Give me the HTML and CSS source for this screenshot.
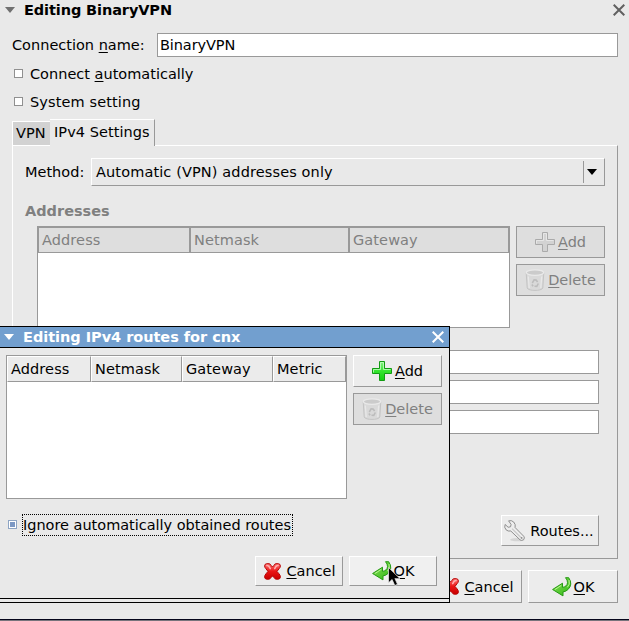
FILE: index.html
```html
<!DOCTYPE html>
<html lang="en">
<head>
<meta charset="utf-8">
<title>Editing BinaryVPN</title>
<link rel="stylesheet" href="styles.css">
</head>
<body>
<svg class="defs" width="0" height="0">
  <defs>
    <linearGradient id="green" x1="0" y1="0" x2="0" y2="1"><stop offset="0" stop-color="#8cf08a"/><stop offset=".5" stop-color="#35e52f"/><stop offset="1" stop-color="#12cf10"/></linearGradient>
    <linearGradient id="red" x1="0" y1="0" x2="0" y2="1"><stop offset="0" stop-color="#ff7373"/><stop offset=".5" stop-color="#e91515"/><stop offset="1" stop-color="#c90000"/></linearGradient>
    <linearGradient id="leaf" x1="0" y1="0" x2="1" y2="1"><stop offset="0" stop-color="#8be05a"/><stop offset="1" stop-color="#2fb714"/></linearGradient>
    <symbol id="plus" viewBox="0 0 20 20">
      <path d="M7.5.5h5v7h7v5h-7v7h-5v-7h-7v-5h7z" fill="url(#green)" stroke="#129b13"/>
      <path d="M8.5 8.500v-7h3v7h7M8.500 8.500h-7v3" fill="none" stroke="#c4ffc2" stroke-opacity=".8"/>
    </symbol>
    <symbol id="plus-off" viewBox="0 0 20 20">
      <path d="M7.5.5h5v7h7v5h-7v7h-5v-7h-7v-5h7z" fill="#d2d2d2" stroke="#aaa"/>
      <path d="M8.500 8.500v-7h3v7h7M8.500 8.500h-7v3" fill="none" stroke="#e6e6e6"/>
    </symbol>
    <symbol id="bin" viewBox="0 0 20 22">
      <path d="M1.200 3.500l1 15.500c1 3.200 14.600 3.200 15.600 0l1-15.500z" fill="#d9d9d9" stroke="#c4c4c4"/>
      <ellipse cx="10" cy="3.600" rx="8.700" ry="2.700" fill="#cbcbcb" stroke="#e9e9e9" stroke-width="1.300"/>
      <path d="M3.300 7.500l.9 11.500M16.700 7.500l-.9 11.500" stroke="#e8e8e8" stroke-width="1.300" fill="none"/>
      <path d="M7.300 14l1.800-3.200 2 .3 1.500 2M13.300 14.500l-1.500 2.900-2.300-.2M6.900 15.500l1.200 1.800" stroke="#bcbcbc" stroke-width="1.600" fill="none"/>
    </symbol>
    <symbol id="cross" viewBox="0 0 17 17">
      <path d="M2.600.7H5Q6.300.8 7 2.300L8.500 4l1.500-1.700Q10.700.8 12 .7h2.400q2 .3 2 2.100 0 1.700-1.300 2.900L13 8.400l2.100 2.500q1.300 1.400 1.300 3 0 2-2 2.300H12.200q-1.300-.1-2.200-1.600L8.500 12.900 7 14.600q-.9 1.500-2.200 1.600H2.600q-2-.3-2-2.300 0-1.600 1.300-3L4 8.400 1.900 5.700Q.6 4.500.6 2.800.6 1 2.600.7z" fill="url(#red)" stroke="#b70505"/>
      <path d="M3 2.600q1.800-.3 3.300 3M14 2.600q-1.800-.3-3.300 3" fill="none" stroke="#ffb0b0" stroke-width="1.500" stroke-linecap="round"/>
    </symbol>
    <symbol id="enter" viewBox="0 0 20 20">
      <path d="M13.500.7h3.200q4.500 6.800-.7 11.800-2.300 2.200-5 2.400v4L.6 12.500 10.500 6.200v4.200q4.700-.8 5-4.700.1-2.800-2-5z" fill="url(#leaf)" stroke="#269a14"/>
      <path d="M9.300 8.400l-6.500 4.200M17 3q1.500 4.500-1.700 7.300" stroke="#b9f58f" fill="none"/>
    </symbol>
    <symbol id="wrench" viewBox="0 0 24 24">
      <ellipse cx="14" cy="21" rx="7.500" ry="1.800" fill="#d4d4d4"/>
      <path d="M4.800 1.400l2.600 3.800-.6 2.400-2.500.5L1.200 5.200Q-.2 8.200 2.200 10.800q2 1.800 4.900 1.200l9.600 9.200q1.700 1.500 3.700-.2 1.700-1.800.2-3.500L11.600 8.400q.8-3.400-1.500-5.800Q7.700.4 4.800 1.400z" fill="#eee" stroke="#8a8a8a"/>
      <path d="M8.400 9.600l9.200 9.200" stroke="#c6c6c6" stroke-width="1.200"/>
      <circle cx="18.400" cy="19.200" r=".9" fill="#888"/>
    </symbol>
  </defs>
</svg>

<main class="window">
  <header class="title">
    <i class="roll"></i><h1>Editing BinaryVPN</h1>
    <svg class="close" viewBox="0 0 12 12"><path d="M.7.7l10.600 10.600M11.300.7L.7 11.300"/></svg>
  </header>
  <div class="name-row"><label><span class="t name-label">Connection <u>n</u>ame:</span></label><div class="field name"><span class="t">BinaryVPN</span></div></div>
  <div class="check"><i class="box"></i><span class="t">Connect <u>a</u>utomatically</span></div>
  <div class="check"><i class="box"></i><span class="t wide">System setting</span></div>
  <nav class="tabs"><div class="tab">VPN</div><div class="tab active">IPv4 Settings</div></nav>
  <section class="panel">
    <div class="method"><span class="t">Method:</span>
      <div class="select"><span class="t wide">Automatic (VPN) addresses only</span><i class="arrow"></i></div>
    </div>
    <h2>Addresses</h2>
    <div class="addresses">
      <div class="table off main-table"><div class="head"><span>Address</span><span>Netmask</span><span>Gateway</span></div></div>
      <div class="side">
        <div class="btn off"><svg width="20" height="20"><use href="#plus-off"/></svg><span><u>A</u>dd</span></div>
        <div class="btn off"><svg width="20" height="22"><use href="#bin"/></svg><span><u>D</u>elete</span></div>
      </div>
    </div>
    <div class="inputs"><div class="field"></div><div class="field"></div><div class="field"></div></div>
    <div class="btn routes"><svg width="23" height="24"><use href="#wrench"/></svg><span>Routes...</span></div>
  </section>
  <footer class="actions">
    <div class="btn"><svg width="17" height="17"><use href="#cross"/></svg><span class="gap"><u>C</u>ancel</span></div>
    <div class="btn"><svg width="20" height="20"><use href="#enter"/></svg><span><u>O</u>K</span></div>
  </footer>
</main>

<aside class="dialog">
  <header class="title">
    <i class="roll"></i><h1>Editing IPv4 routes for cnx</h1>
    <svg class="close" viewBox="0 0 12 12"><path d="M.7.7l10.600 10.600M11.300.7L.7 11.300"/></svg>
  </header>
  <div class="routes-area">
    <div class="table routes-table"><div class="head"><span>Address</span><span>Netmask</span><span>Gateway</span><span>Metric</span></div></div>
    <div class="side">
      <div class="btn"><svg width="20" height="20"><use href="#plus"/></svg><span><u>A</u>dd</span></div>
      <div class="btn off"><svg width="20" height="22"><use href="#bin"/></svg><span><u>D</u>elete</span></div>
    </div>
  </div>
  <div class="ignore"><i class="box on"></i><div class="focus"><span class="t">Ignore automatically obtained routes</span></div></div>
  <footer class="dialog-actions">
    <div class="btn"><svg width="17" height="17"><use href="#cross"/></svg><span class="gap"><u>C</u>ancel</span></div>
    <div class="btn hover"><svg width="20" height="20"><use href="#enter"/></svg><span><u>O</u>K</span></div>
  </footer>
</aside>
<svg class="cursor" viewBox="0 0 13 20"><path d="M.5.5v15.300l3.600-3.300 2.700 6 2.700-1.200-2.600-5.800h5z" fill="#000" stroke="#eee" stroke-width=".7"/></svg>
</body>
</html>
```

FILE: styles.css
```css
* { box-sizing: border-box; }
body {
  margin: 0;
  width: 629px;
  height: 621px;
  overflow: hidden;
  background: #e9e9e9;
  color: #000;
  font: 14.5px/18px "DejaVu Sans", sans-serif;
  white-space: nowrap;
}
.defs { position: absolute; }
svg { flex: none; display: block; }
h1, h2 { margin: 0; font-size: 14.5px; line-height: 18px; letter-spacing: -0.1px; }
h2 { letter-spacing: 0; }
u { text-decoration: underline; text-decoration-thickness: 1px; text-underline-offset: 2px; }
.wide { letter-spacing: 0.12px; }

.window { height: 621px; display: flex; flex-direction: column; border-bottom: 1px solid #77747c; box-shadow: inset 0 -1px #05051a; }
.title { display: flex; align-items: center; flex: none; }
.window > .title { height: 20px; padding: 0 4px 0 5px; }
.roll { border: 5.5px solid transparent; border-top: 6px solid #707070; border-bottom: 0; }
.window .title h1 { margin-left: 9px; }
.close { width: 12px; height: 12px; margin-left: auto; fill: none; stroke: #606060; stroke-width: 2; }

.name-row { display: flex; align-items: center; margin: 13px 11px 0 12px; height: 24px; }
.name-row label { width: 145px; }
.field { height: 24px; background: #fff; border: 1px solid #999; }
.name { flex: 1; padding: 2px 2px; }
.name .t { letter-spacing: -0.1px; }
.check { display: flex; align-items: center; gap: 7px; height: 18px; margin: 8px 0 0 14px; }
.check + .check { margin-top: 10px; }
.box { flex: none; width: 9px; height: 9px; border: 1px solid #909090; background: #fff; }
.check .box { margin-bottom: 1px; }
.box.on { margin-bottom: 1px; border-color: #8ea5c4; background: #7c98c4; box-shadow: inset 0 0 0 1px #fff; }

.tabs { display: flex; align-items: flex-end; height: 27px; margin: 8px 0 0 12px; }
.tab { width: 38px; height: 25px; padding: 2px 0 0 3px; background: #d2d2d2; border: 1px solid #fff; border-right: 0; border-bottom: 0; }
.tab.active { width: 105px; height: 27px; padding: 3px 0 0 4px; background: #e9e9e9; border-left: 0; border-right: 1px solid #999; position: relative; z-index: 1; letter-spacing: 0.06px; }
.panel { width: 606px; height: 414px; margin: -1px 0 0 12px; border: 1px solid; border-color: #fff #999 #999 #fff; }
.method { display: flex; align-items: center; margin: 12px 12px 0 12px; height: 28px; }
.method > .t { width: 66px; }
.select { flex: 1; height: 28px; display: flex; align-items: center; padding: 0 6px 0 4px; border: 1px solid; border-color: #fff #999 #999 #fff; }
.arrow { margin-left: auto; width: 15px; height: 22px; border-left: 1px solid #999; display: flex; align-items: center; }
.arrow::before { content: ""; margin-left: 3px; border: 5.5px solid transparent; border-top: 6px solid #000; border-bottom: 0; }
h2 { margin: 16px 0 0 12px; color: #808080; }
.addresses { display: flex; gap: 6px; margin: 6px 0 0 24px; }
.table { background: #fff; border: 1px solid #999; }
.main-table { width: 473px; height: 102px; }
.head { display: grid; height: 26px; letter-spacing: 0.1px; }
.main-table .head { grid-template-columns: 152px 159px 1fr; }
.head span { padding: 3px 0 0 3px; background: #ebebeb; border: 1px solid; border-color: #fff #999 #999 #fff; }
.off .head span { background: #dedede; border-color: #999; color: #808080; }
.side { display: flex; flex-direction: column; gap: 6px; }
.btn { display: flex; align-items: center; justify-content: center; background: #ececec; border: 1px solid; border-color: #fff #999 #999 #fff; }
.side .btn { width: 89px; height: 32px; gap: 3px; }
.gap { margin-left: 3px; }
.btn.off { border-color: #999; background: #dedede; color: #808080; }
.inputs { display: flex; flex-direction: column; gap: 6px; margin: 22px 18px 0 160px; }
.panel .routes { width: 98px; height: 31px; margin: 81px 0 0 488px; gap: 3px; padding-right: 2px; }
.actions { display: flex; justify-content: flex-end; gap: 6px; margin: 11px 11px 0 0; }
.actions .btn { width: 90px; height: 33px; gap: 2px; }

.dialog { position: absolute; left: 0; top: 326px; width: 450px; height: 277px; background: #e9e9e9; border: 1px solid #000; border-left: 0; }
.dialog::after { content: ""; display: block; margin-top: 12px; border-top: 1px solid #000; }
.dialog .title { height: 21px; padding: 0 5px 0 4px; background: #729fcf; border-bottom: 1px solid #000; color: #fff; }
.dialog .roll { border-top-color: #fff; }
.dialog h1 { margin-left: 9px; letter-spacing: -0.03px; }
.dialog .close { stroke: #fff; }
.routes-area { display: flex; gap: 6px; margin: 7px 0 0 6px; }
.routes-table { width: 341px; height: 144px; }
.routes-table .head { grid-template-columns: 84px 91px 91px 1fr; }
.ignore { display: flex; align-items: center; height: 22px; margin: 15px 0 0 8px; gap: 5px; }
.focus { width: 271px; height: 22px; border: 1px dotted #000; padding: 1px 0; letter-spacing: -0.02px; }
.dialog-actions { display: flex; justify-content: flex-end; gap: 6px; margin: 20px 12px 0 0; }
.dialog-actions .btn { width: 88px; height: 30px; gap: 2px; }
.dialog-actions .btn:first-child, .actions .btn:first-child { padding-left: 2px; }
.btn.hover { background: #f0f0f0; }
.cursor { position: absolute; left: 388px; top: 567px; width: 13px; height: 20px; }
```
